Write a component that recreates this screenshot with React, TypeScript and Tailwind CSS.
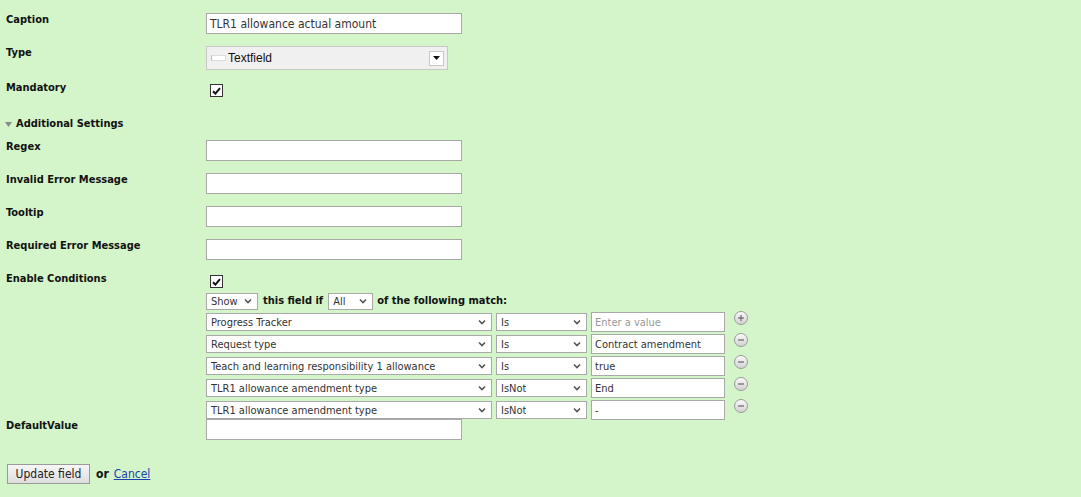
import React from "react";

const FONT = { fontFamily: '"DejaVu Sans Condensed", "DejaVu Sans", Tahoma, sans-serif' };

function Checkbox() {
  return (
    <div className="w-[13px] h-[13px] border border-[#333] bg-white flex items-center justify-center">
      <svg width="9" height="8" viewBox="0 0 9 8">
        <path d="M1 4.2 L3.4 6.6 L8 1.2" fill="none" stroke="#111" strokeWidth="2" />
      </svg>
    </div>
  );
}

function Chevron() {
  return (
    <svg width="8" height="6" viewBox="0 0 8 6" className="shrink-0">
      <path d="M1 1.5 L4 4.5 L7 1.5" fill="none" stroke="#555" strokeWidth="1.6" />
    </svg>
  );
}

function Sel({ text, w, h = "h-[18px]" }: { text: string; w: string; h?: string }) {
  return (
    <div className={`${w} ${h} bg-white border border-[#a9a9a9] flex items-center justify-between pl-[4px] pr-[5px] text-[11px] text-[#333] leading-none`}>
      <span className="whitespace-nowrap overflow-hidden">{text}</span>
      <Chevron />
    </div>
  );
}

function TextInput({ value = "" }: { value?: string }) {
  return (
    <div className="w-[256px] h-[21px] bg-white border border-[#a9a9a9] flex items-center px-[3px] text-[12px] text-[#333] leading-none">
      <span>{value}</span>
    </div>
  );
}

function CircleBtn({ plus }: { plus?: boolean }) {
  return (
    <div className="w-[14px] h-[14px] rounded-full border border-[#9a9a9a] bg-gradient-to-b from-[#fafafa] to-[#d2d2d2] flex items-center justify-center">
      <svg width="8" height="8" viewBox="0 0 8 8">
        <path d="M1 4 H7" stroke="#666" strokeWidth="1.2" />
        {plus && <path d="M4 1 V7" stroke="#666" strokeWidth="1.2" />}
      </svg>
    </div>
  );
}

function Row({ label, children, className = "" }: { label: string; children: React.ReactNode; className?: string }) {
  return (
    <div className={`flex items-start ${className}`}>
      <div className="w-[200px] shrink-0 font-bold text-[11px] leading-[14px] text-[#111]">{label}</div>
      {children}
    </div>
  );
}

const conditions = [
  { f: "Progress Tracker", op: "Is", v: "", ph: "Enter a value", plus: true },
  { f: "Request type", op: "Is", v: "Contract amendment" },
  { f: "Teach and learning responsibility 1 allowance", op: "Is", v: "true" },
  { f: "TLR1 allowance amendment type", op: "IsNot", v: "End" },
  { f: "TLR1 allowance amendment type", op: "IsNot", v: "-" },
];

export default function App() {
  return (
    <div className="w-[1081px] h-[497px] bg-[#d3f5c9] pl-[6px] pt-[13px] text-[#111] overflow-hidden" style={FONT}>
      <Row label="Caption">
        <TextInput value="TLR1 allowance actual amount" />
      </Row>

      <Row label="Type" className="mt-[12px]">
        <div
          className="w-[242px] h-[24px] bg-[#f0f0f0] border border-[#c8c8c8] flex items-center pl-[4px] pr-[3px]"
          style={{ fontFamily: '"Liberation Sans", Arial, sans-serif' }}
        >
          <div className="w-[15px] h-[6px] bg-white border border-[#ddd] border-l-[#bbb] mr-[2px]" />
          <span className="text-[12px] text-[#111]">Textfield</span>
          <div className="ml-auto w-[15px] h-[15px] bg-white border border-[#c8c8c8] flex items-center justify-center">
            <svg width="7" height="4" viewBox="0 0 7 4">
              <path d="M0 0 H7 L3.5 4 Z" fill="#111" />
            </svg>
          </div>
        </div>
      </Row>

      <Row label="Mandatory" className="mt-[11px]">
        <div className="mt-[3px] ml-[4px]">
          <Checkbox />
        </div>
      </Row>

      <div className="mt-[20px] flex items-center h-[14px] text-[11px] font-bold text-[#111] leading-[14px] -ml-[1px]">
        <svg width="7" height="5" viewBox="0 0 7 5" className="mr-[4px]">
          <path d="M0 0 H7 L3.5 5 Z" fill="#8a8a8a" />
        </svg>
        Additional Settings
      </div>

      <Row label="Regex" className="mt-[9px]">
        <TextInput />
      </Row>
      <Row label="Invalid Error Message" className="mt-[12px]">
        <TextInput />
      </Row>
      <Row label="Tooltip" className="mt-[12px]">
        <TextInput />
      </Row>
      <Row label="Required Error Message" className="mt-[12px]">
        <TextInput />
      </Row>

      <Row label="Enable Conditions" className="mt-[12px]">
        <div className="flex flex-col">
          <div className="mt-[3px] ml-[4px]">
            <Checkbox />
          </div>
          <div className="mt-[4px] flex items-center h-[18px] text-[11px]">
            <Sel text="Show" w="w-[52px]" h="h-[17px]" />
            <span className="font-bold mx-[5px] text-[#111]">this field if</span>
            <Sel text="All" w="w-[45px]" h="h-[17px]" />
            <span className="font-bold ml-[4px] text-[#111]">of the following match:</span>
          </div>
          <div className="mt-[2px] flex flex-col gap-[2px]">
            {conditions.map((c, i) => (
              <div key={i} className="flex items-center h-[20px]">
                <Sel text={c.f} w="w-[286px]" />
                <div className="ml-[4px]">
                  <Sel text={c.op} w="w-[91px]" />
                </div>
                <div className="ml-[4px] w-[134px] h-[20px] bg-white border border-[#a9a9a9] flex items-center px-[3px] text-[11px] text-[#333] leading-none">
                  {c.v ? <span>{c.v}</span> : <span className="text-[#999]">{c.ph}</span>}
                </div>
                <div className="ml-[9px] self-start -mt-[1px]">
                  <CircleBtn plus={c.plus} />
                </div>
              </div>
            ))}
          </div>
        </div>
      </Row>

      <Row label="DefaultValue" className="-mt-[1px]">
        <TextInput />
      </Row>

      <div className="mt-[24px] flex items-center text-[12px] ml-[1px]">
        <div className="w-[83px] h-[20px] border border-[#9a9a9a] bg-gradient-to-b from-[#f6f6f6] to-[#dedede] flex items-center justify-center text-[#222]">
          Update field
        </div>
        <span className="ml-[6px] font-bold text-[#111]">or</span>
        <span className="ml-[5px] text-[#1a3fb0] underline">Cancel</span>
      </div>
    </div>
  );
}
